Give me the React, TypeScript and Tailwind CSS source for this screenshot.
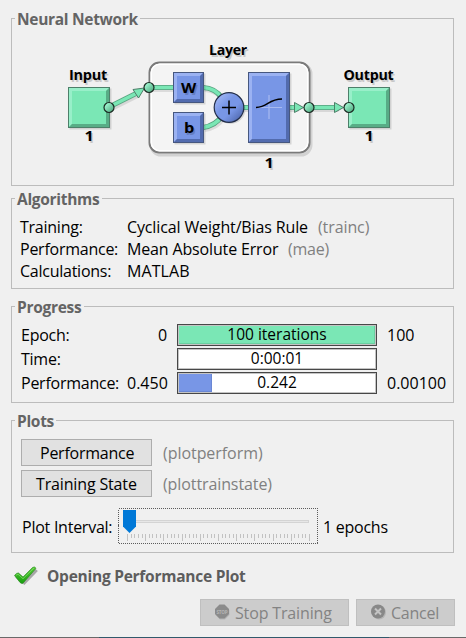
import type { ReactNode } from "react";

const seg = "font-['Open_Sans','Noto_Sans',sans-serif]";

function T({ w, children, className = "" }: { w: number; children: string; className?: string }) {
  return (
    <span className={`block h-[22px] shrink-0 whitespace-nowrap text-left leading-[22px] ${className}`} style={{ width: w }}>
      {children}
    </span>
  );
}

function Group({ title, w, className, children }: { title: string; w: number; className: string; children: ReactNode }) {
  return (
    <fieldset className={`m-0 w-[443px] min-w-0 border border-[#bcbcbc] p-0 pl-[3px] ${className}`}>
      <legend className="h-[19px] px-[2px] text-[15.5px] font-bold tracking-[-0.3px] text-[#646464]">
        <T w={w} className="-mt-px">{title}</T>
      </legend>
      {children}
    </fieldset>
  );
}

function Block({ x, y, w, h, green }: { x: number; y: number; w: number; h: number; green?: boolean }) {
  const c = green
    ? { f: "#7ae7b5", l: "#98efc9", d: "#58ac86" }
    : { f: "#7896e6", l: "#9bb2f2", d: "#526bae" };
  const i = 4;
  return (
    <g>
      <rect x={x + 1.5} y={y + 1.5} width={w} height={h} fill="#000" opacity=".13" />
      <rect x={x} y={y} width={w} height={h} fill={c.f} />
      <path d={`M${x} ${y}h${w}l${-i} ${i}h${2 * i - w}v${h - 2 * i}l${-i} ${i}z`} fill={c.l} />
      <path d={`M${x + w} ${y}v${h}h${-w}l${i} ${-i}h${w - 2 * i}v${2 * i - h}z`} fill={c.d} />
      <rect x={x + 0.5} y={y + 0.5} width={w - 1} height={h - 1} fill="none" stroke={green ? "#4d7f69" : "#46577f"} strokeWidth="1" />
    </g>
  );
}

function Wire({ d }: { d: string }) {
  return (
    <g fill="none">
      <path d={d} stroke="#000" strokeOpacity=".1" strokeWidth="5" transform="translate(1.5 2)" />
      <path d={d} stroke="#58a27f" strokeWidth="5" />
      <path d={d} stroke="#7ae7b5" strokeWidth="3.4" />
    </g>
  );
}

function Node({ x, y }: { x: number; y: number }) {
  return <circle cx={x} cy={y} r="5" fill="url(#node)" stroke="#1b2b23" strokeWidth="1.2" />;
}

function Label({ x, y, w, children }: { x: number; y: number; w: number; children: string }) {
  return (
    <g fontSize="15" fontWeight="700">
      <text x={x + 1.5} y={y + 1.5} textLength={w} lengthAdjust="spacingAndGlyphs" fill="#000" opacity=".16">{children}</text>
      <text x={x} y={y} textLength={w} lengthAdjust="spacingAndGlyphs" fill="#000">{children}</text>
    </g>
  );
}

function Network() {
  return (
    <svg width="438" height="157" viewBox="15 28 438 157" className="block">
      <defs>
        <linearGradient id="node" x1="0" y1="0" x2="1" y2="1">
          <stop offset=".25" stopColor="#98efc9" />
          <stop offset=".8" stopColor="#5bb48b" />
        </linearGradient>
        <linearGradient id="sum" x1="0" y1="0" x2="1" y2="1">
          <stop offset=".15" stopColor="#9bb2f2" />
          <stop offset=".4" stopColor="#7896e6" />
          <stop offset=".6" stopColor="#7896e6" />
          <stop offset=".9" stopColor="#4f68ad" />
        </linearGradient>
      </defs>
      <rect x="151" y="64" width="160" height="91" rx="10" fill="none" stroke="#000" strokeOpacity=".12" strokeWidth="3" />
      <rect x="149.5" y="62.5" width="160" height="90" rx="10" fill="#f4f4f4" stroke="#7a7a7a" strokeWidth="2" />
      <rect x="151.2" y="64.2" width="156.6" height="86.6" rx="8.5" fill="none" stroke="#fff" strokeWidth="1.5" />
      <Label x={209} y={55} w={38}>Layer</Label>
      <Label x={69} y={80} w={38}>Input</Label>
      <Label x={343.5} y={80} w={50}>Output</Label>
      <Block x={68} y={87} w={42} h={41} green />
      <Block x={348} y={87} w={42} h={41} green />
      <Wire d="M109 107L137 93" />
      <path d="M133 89.500l11.500-1.500-6 10z" fill="#7ae7b5" stroke="#4d7f69" />
      <Wire d="M150 87.500H174" />
      <Wire d="M203 87.500C213 88 218 92 222 98" />
      <Wire d="M203 127.500C213 126 218 122 222 116" />
      <Wire d="M243 107.500H297" />
      <Wire d="M309 107.500H337" />
      <path d="M294.500 102.500v10l9-5z" fill="#7ae7b5" stroke="#4d7f69" />
      <path d="M334.500 102.500v10l9-5z" fill="#7ae7b5" stroke="#4d7f69" />
      <Block x={173} y={72} w={31} h={31} />
      <Block x={173} y={112} w={31} h={31} />
      <Block x={248} y={72} w={42} h={71} />
      <circle cx="230.500" cy="109" r="15" fill="#000" opacity=".13" />
      <circle cx="229" cy="107.500" r="14.800" fill="url(#sum)" stroke="#222d49" strokeWidth="1.200" />
      <path d="M222 107.500h14M229 100.500v14" stroke="#000" strokeWidth="1.500" />
      <path d="M256 107.500h26M269 95v24" stroke="#a7baf0" strokeWidth="1.200" />
      <path d="M256 107.500C268 107.500 268 99 282 99" fill="none" stroke="#000" strokeWidth="1.500" />
      <Node x={109} y={107.5} />
      <Node x={149} y={87.5} />
      <Node x={309} y={107.5} />
      <Node x={349} y={107.5} />
      <Label x={181} y={93} w={15}>W</Label>
      <Label x={184} y={133} w={10}>b</Label>
      <Label x={84.5} y={141} w={9}>1</Label>
      <Label x={364.5} y={141} w={9}>1</Label>
      <Label x={264.5} y={168} w={9}>1</Label>
    </svg>
  );
}

function Bar({ fill, children }: { fill: string; children: string }) {
  return (
    <div className="ml-[10px] grid h-[22px] w-[200px] border border-[#474747] bg-white">
      <div className="col-start-1 row-start-1 border border-[#c4c4c4]">
        <div className={`h-full ${fill}`} />
      </div>
      <div className="col-start-1 row-start-1 -mt-px h-[20px] whitespace-nowrap text-center text-[15.5px] leading-[20px] tracking-normal text-black">
        {children}
      </div>
    </div>
  );
}

function Row({ label, lw, from, fw, to, tw, children }: { label: string; lw: number; from?: string; fw?: number; to?: string; tw?: number; children: ReactNode }) {
  return (
    <div className="mb-[2px] flex h-[22px]">
      <div className="w-[97px]"><T w={lw}>{label}</T></div>
      <div className="flex w-[49px] justify-end tracking-normal">{from && <T w={fw!}>{from}</T>}</div>
      {children}
      <div className="pl-[10px] tracking-normal">{to && <T w={tw!}>{to}</T>}</div>
    </div>
  );
}

function Slider() {
  return (
    <svg width="201" height="36" viewBox="0 0 201 36" className="ml-[6px] block" shapeRendering="crispEdges">
      <rect x=".5" y=".5" width="199" height="35" fill="none" stroke="#5c5c5c" strokeDasharray="1 1" />
      <rect x="11.500" y="12.500" width="179" height="2" fill="#e7e7e7" stroke="#d4d4d4" />
      {Array.from({ length: 51 }, (_, i) => (
        <path key={i} d={`M${Math.round(9 + i * 3.64) + 0.5} 26v${i % 5 === 0 ? 7 : 4}`} stroke="#c2c2c2" />
      ))}
      <path d="M5 2h13v16.500l-6.500 6.500-6.500-6.500z" fill="#0078d7" shapeRendering="auto" />
    </svg>
  );
}

export default function App() {
  return (
    <main className={`flex h-[638px] w-[466px] flex-col overflow-hidden bg-[#f0f0f0] pl-[11px] pt-[9px] text-[16px] tracking-[-0.25px] text-black ${seg}`}>
      <Group title="Neural Network" w={121} className="h-[177px]">
        <Network />
      </Group>

      <Group title="Algorithms" w={83} className="mt-[3px] h-[100px]">
        <div className="pl-[5px] pt-[8px]">
          <div className="flex h-[22px]">
            <div className="w-[107px]"><T w={63}>Training:</T></div>
            <T w={181} className="tracking-[-0.13px]">Cyclical Weight/Bias Rule</T>
            <T w={51} className="ml-[10px] tracking-[-0.1px] text-[#808080]">(trainc)</T>
          </div>
          <div className="flex h-[22px]">
            <div className="w-[107px]"><T w={97}>Performance:</T></div>
            <T w={151} className="tracking-[-0.15px]">Mean Absolute Error</T>
            <T w={41} className="ml-[10px] text-[#808080]">(mae)</T>
          </div>
          <div className="flex h-[22px]">
            <div className="w-[107px]"><T w={91}>Calculations:</T></div>
            <T w={63} className="tracking-[0.1px]">MATLAB</T>
          </div>
        </div>
      </Group>

      <Group title="Progress" w={65} className="mt-[8px] h-[106px]">
        <div className="pl-[6px] pt-[8px]">
          <Row label="Epoch:" lw={49} from="0" fw={9} to="100" tw={27}>
            <Bar fill="w-full bg-[#7ae7b5] border-r border-b border-[#6bcfa1]">100 iterations</Bar>
          </Row>
          <Row label="Time:" lw={39}>
            <Bar fill="w-0">0:00:01</Bar>
          </Row>
          <Row label="Performance:" lw={97} from="0.450" fw={40} to="0.00100" tw={58}>
            <Bar fill="w-[33px] bg-[#7896e6] border-r border-b border-[#6a87d4]">0.242</Bar>
          </Row>
        </div>
      </Group>

      <Group title="Plots" w={37} className="mt-[8px] h-[142px]">
        <div className="pl-[6px] pt-[9px]">
          <div className="flex h-[31px]">
            <button className="flex h-[27px] w-[131px] justify-center border border-[#adadad] bg-[#e1e1e1] pt-[2px]"><T w={93}>Performance</T></button>
            <T w={100} className="ml-[11px] mt-[3px] tracking-[-0.05px] text-[#808080]">(plotperform)</T>
          </div>
          <div className="flex h-[31px]">
            <button className="flex h-[27px] w-[131px] justify-center border border-[#adadad] bg-[#e1e1e1] pt-[2px]"><T w={101} className="tracking-[-0.15px]">Training State</T></button>
            <T w={109} className="ml-[11px] mt-[3px] tracking-[-0.1px] text-[#808080]">(plottrainstate)</T>
          </div>
          <div className="mt-[7px] flex">
            <T w={90} className="ml-px mt-[8px]">Plot Interval:</T>
            <Slider />
            <T w={65} className="ml-[4px] mt-[8px]">1 epochs</T>
          </div>
        </div>
      </Group>

      <div className="mt-[12px] flex h-[34px]">
        <svg width="26" height="22" viewBox="0 0 26 22" className="ml-[2px] block">
          <defs>
            <linearGradient id="tick" x1="0" y1="0" x2="0" y2="1">
              <stop offset="0" stopColor="#58cc38" />
              <stop offset="1" stopColor="#189f10" />
            </linearGradient>
          </defs>
          <path d="M1.500 11.500l3.500-3.500 5 4L20.500 2l3.500 3L10.500 19z" fill="#000" opacity=".3" transform="translate(.9 1)" />
          <path d="M1.500 10.500q2-3 4-2.500l4.500 4L19.500 2.500q2-1.500 3.500.8L10 18.200q-1.500.8-3-.8z" fill="url(#tick)" stroke="#23871a" strokeWidth=".6" strokeLinejoin="round" />
          <path d="M3 10.200l2-1 5 4.500L21 3" fill="none" stroke="#7fdc66" strokeWidth=".8" />
        </svg>
        <T w={200} className="ml-[8px] text-[15.5px] font-bold text-[#5d5d5d]">Opening Performance Plot</T>
      </div>

      <div className="flex gap-[7px] pl-[189px]">
        <button className="flex h-[27px] w-[149px] border border-[#bfbfbf] bg-[#cccccc] pl-[13px] pt-[2px] text-[#838383]">
          <svg width="17" height="18" viewBox="0 0 17 18" className="mt-px block">
            <path d="M6 2.500h5l4.500 4.500v5l-4.500 4.500h-5l-4.500-4.500v-5z" fill="#b5b5b5" />
            <path d="M5.500 1.500h5l4.500 4.500v5l-4.500 4.500h-5l-4.500-4.500v-5z" fill="#8b8b8b" />
            <text x="2.500" y="10.500" fontSize="5.500" fontWeight="700" textLength="11" lengthAdjust="spacingAndGlyphs" fill="#b5b5b5">STOP</text>
          </svg>
          <T w={98} className="ml-[4px] tracking-[-0.15px]">Stop Training</T>
        </button>
        <button className="flex h-[27px] w-[99px] border border-[#bfbfbf] bg-[#cccccc] pl-[13px] pt-[2px] text-[#838383]">
          <svg width="17" height="18" viewBox="0 0 17 18" className="mt-px block">
            <circle cx="9" cy="9.500" r="7" fill="#b5b5b5" />
            <circle cx="8" cy="8.500" r="7" fill="#888" />
            <path d="M5 5.500l6 6m0-6l-6 6" stroke="#c4c4c4" strokeWidth="2" />
          </svg>
          <T w={47} className="ml-[4px]">Cancel</T>
        </button>
      </div>
      <div className="-ml-[11px] mt-[11px] flex h-px w-[466px] bg-[#696969]">
        <div className="ml-[99px] w-[290px] bg-[#31596b]" />
      </div>
    </main>
  );
}
